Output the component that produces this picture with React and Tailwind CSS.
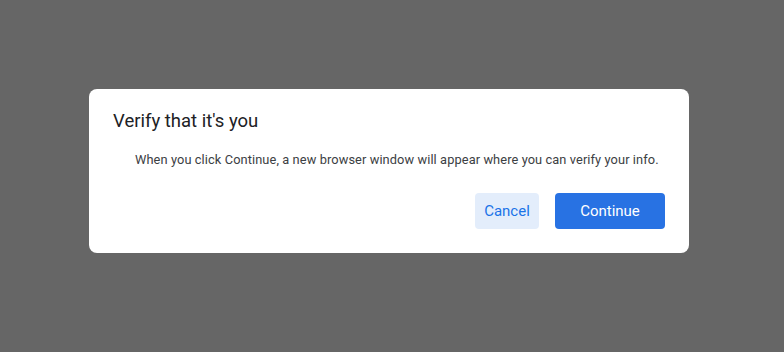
import React from "react";

const App = () => {
  return (
    <main className="w-[784px] h-[352px] bg-[#666666] pl-[89px] pt-[89px] font-['Roboto',sans-serif]">
      {/* Dialog */}
      <section className="w-[600px] h-[164px] bg-white rounded-lg flex flex-col px-6 pt-[20px] pb-6">
        <h1 className="text-[18.5px] leading-[24px] text-[#202124] font-normal">
          Verify that it's you
        </h1>

        <p className="mt-[18px] pl-[22px] text-[12.8px] leading-[18px] text-[#3c4043] tracking-[0.1px]">
          When you click Continue, a new browser window will appear where you can verify your info.
        </p>

        {/* Buttons */}
        <div className="mt-auto flex justify-end gap-4">
          <button className="w-[64px] h-[36px] rounded bg-[#e3edfb] text-[#1a73e8] text-[15px] font-normal">
            Cancel
          </button>
          <button className="w-[110px] h-[36px] rounded bg-[#2872e3] text-white text-[15px] font-normal">
            Continue
          </button>
        </div>
      </section>
    </main>
  );
};

export default App;
